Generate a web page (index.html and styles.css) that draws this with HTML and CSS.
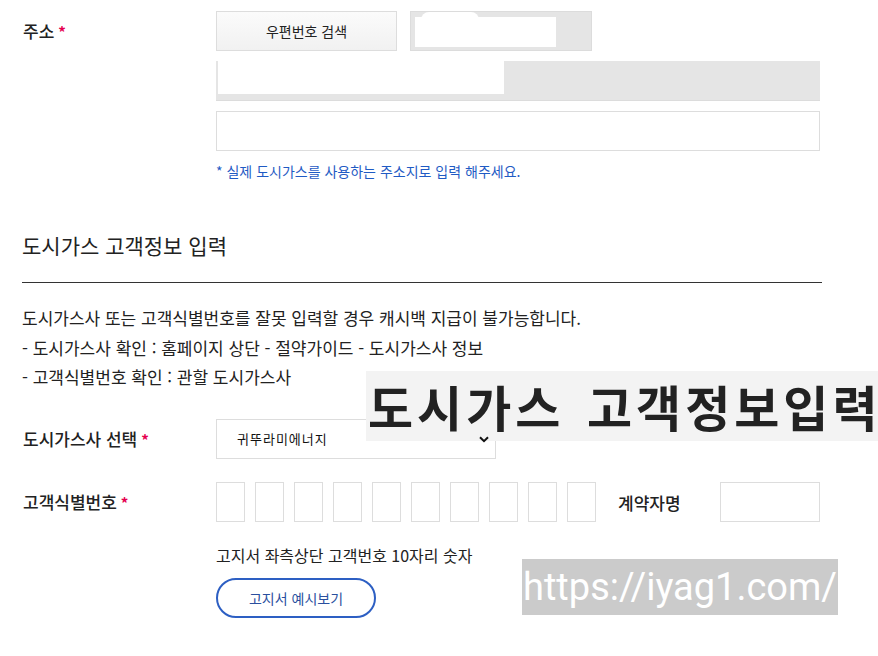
FILE: index.html
```html
<!DOCTYPE html>
<html lang="ko">
<head>
<meta charset="utf-8">
<link rel="stylesheet" href="styles.css">
</head>
<body>
<div class="page">
  <div class="row addr-row">
    <div class="label">주소<span class="req">*</span></div>
    <div class="field">
      <div class="line1">
        <button class="zip-btn">우편번호 검색</button>
        <div class="zip-box"><div class="mask1"></div><div class="mask1b"></div></div>
      </div>
      <div class="addr1"><div class="mask2"></div><div class="mask2b"></div></div>
      <div class="addr2"></div>
      <p class="note">* 실제 도시가스를 사용하는 주소지로 입력 해주세요.</p>
    </div>
  </div>

  <h2 class="section-title">도시가스 고객정보 입력</h2>
  <div class="desc">
    <p>도시가스사 또는 고객식별번호를 잘못 입력할 경우 캐시백 지급이 불가능합니다.</p>
    <p>- 도시가스사 확인 : 홈페이지 상단 - 절약가이드 - 도시가스사 정보</p>
    <p>- 고객식별번호 확인 : 관할 도시가스사</p>
  </div>

  <div class="row sel-row">
    <div class="label">도시가스사 선택<span class="req">*</span></div>
    <div class="select">
      <span>귀뚜라미에너지</span>
      <svg class="chev" width="10" height="7" viewBox="0 0 10 7"><path d="M1 1.2 L5 5.2 L9 1.2" fill="none" stroke="#111" stroke-width="2"/></svg>
    </div>
  </div>

  <div class="row id-row">
    <div class="label">고객식별번호<span class="req">*</span></div>
    <div class="digits">
      <div class="digit"></div><div class="digit"></div><div class="digit"></div><div class="digit"></div><div class="digit"></div>
      <div class="digit"></div><div class="digit"></div><div class="digit"></div><div class="digit"></div><div class="digit"></div>
    </div>
    <div class="label2">계약자명</div>
    <div class="name-input"></div>
  </div>

  <div class="hint-wrap">
    <p class="hint">고지서 좌측상단 고객번호 10자리 숫자</p>
    <button class="bill-btn">고지서 예시보기</button>
  </div>

  <div class="overlay-title">도시가스 고객정보입<span class="last">력</span></div>
  <div class="watermark">https://iyag1.com/</div>
</div>
</body>
</html>
```
FILE: styles.css
```css
* { box-sizing: border-box; }
html, body { margin: 0; padding: 0; background: #fff; }
body {
  font-family: "Noto Sans CJK KR", "Noto Sans", sans-serif;
  color: #222;
  width: 878px;
  height: 656px;
  overflow: hidden;
}
.page {
  position: relative;
  padding: 11px 0 0 22px;
  width: 878px;
  height: 656px;
}
p { margin: 0; }
.row { display: flex; }
.label {
  width: 194px;
  flex: none;
  font-size: 17px;
  font-weight: 500;
  color: #222;
  line-height: 40px;
  padding-left: 1px;
}
.req { color: #e5004f; margin-left: 4px; font-weight: 700; font-size: 15px; }
.field { width: 604px; display: flex; flex-direction: column; }
.line1 { display: flex; gap: 13px; height: 40px; }
.zip-btn {
  width: 181px;
  height: 40px;
  border: 1px solid #ddd;
  background: linear-gradient(#fbfbfb, #f1f1f1);
  font-family: inherit;
  font-size: 14px;
  color: #222;
  padding: 0;
}
.zip-box {
  position: relative;
  width: 182px;
  height: 40px;
  background: #e5e5e5;
  border: 1px solid #dcdcdc;
}
.mask1 { position: absolute; left: 4px; top: 5px; width: 141px; height: 30px; background: #fff; }
.mask1b { position: absolute; left: 10px; top: 0; width: 58px; height: 8px; background: #fff; border-radius: 10px 10px 0 0; }
.addr1 {
  position: relative;
  margin-top: 10px;
  height: 40px;
  background: #e5e5e5;
  border-bottom: 1px solid #dcdcdc;
}
.mask2 { position: absolute; left: 2px; top: 0; width: 286px; height: 33px; background: #fff; }
.mask2b { position: absolute; left: 284px; top: 0; width: 4px; height: 19px; background: #fff; }
.addr2 {
  margin-top: 10px;
  height: 40px;
  border: 1px solid #ddd;
}
.note {
  margin-top: 10px;
  font-size: 14px;
  line-height: 20px;
  color: #1f5bc4;
}
.section-title {
  margin: 49px 0 0 0;
  font-size: 21px;
  font-weight: 400;
  line-height: 30px;
  color: #222;
}
.desc {
  margin-top: 22px;
  border-top: 1px solid #333;
  width: 800px;
  padding-top: 20px;
  font-size: 17px;
  line-height: 29.5px;
  color: #222;
}
.sel-row { margin-top: 27px; }
.select {
  width: 280px;
  height: 40px;
  border: 1px solid #ddd;
  display: flex;
  align-items: center;
  justify-content: space-between;
  padding: 0 6px 0 20px;
  font-size: 13px;
  letter-spacing: 1px;
  color: #111;
}
.chev { margin-top: 2px; position: relative; z-index: 2; }
.id-row { margin-top: 22px; align-items: center; }
.digits { display: flex; gap: 10px; }
.digit { width: 29px; height: 40px; border: 1px solid #ddd; }
.label2 {
  width: 124px;
  flex: none;
  padding-left: 22px;
  font-size: 17px;
  font-weight: 500;
}
.name-input { width: 100px; height: 40px; border: 1px solid #ddd; }
.hint-wrap { padding-left: 194px; margin-top: 22px; }
.hint { font-size: 16px; line-height: 20px; color: #222; }
.bill-btn {
  margin-top: 13px;
  width: 160px;
  height: 40px;
  border: 2px solid #2d5fc3;
  border-radius: 20px;
  background: #fff;
  font-family: inherit;
  font-size: 14px;
  color: #2a4f9e;
  padding: 0;
}
.overlay-title {
  position: absolute;
  z-index: 1;
  left: 366px;
  top: 371px;
  width: 512px;
  height: 70px;
  background: #f3f3f3;
  font-size: 49px;
  font-weight: 700;
  line-height: 70px;
  color: #222;
  padding-left: 2px;
  white-space: nowrap;
  letter-spacing: 4px;
  word-spacing: 5px;
}
.overlay-title .last { letter-spacing: 0; }
.watermark {
  position: absolute;
  left: 522px;
  top: 559px;
  width: 316px;
  height: 56px;
  background: #cbcbcb;
  color: #fff;
  font-family: Roboto, "Noto Sans", sans-serif;
  font-size: 38px;
  line-height: 56px;
  padding-left: 1px;
  white-space: nowrap;
}
```
